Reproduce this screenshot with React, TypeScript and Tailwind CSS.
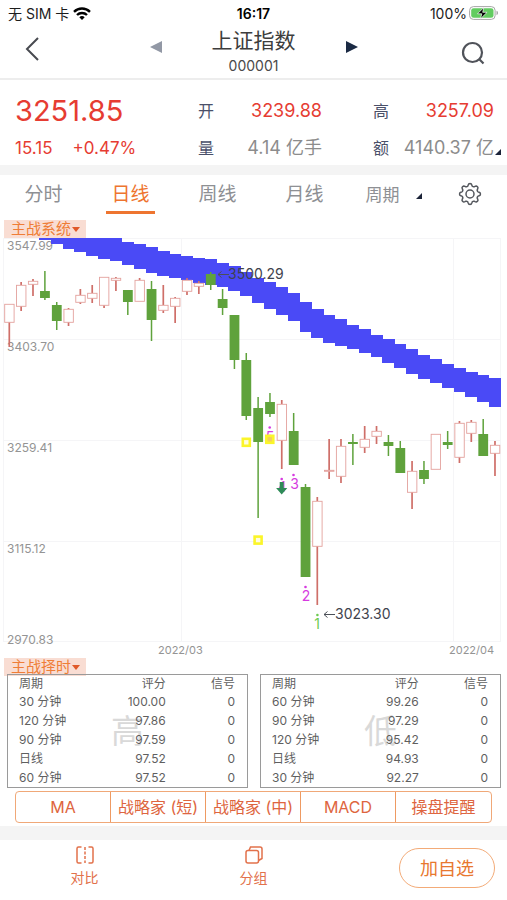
import type { ReactNode } from "react";

// [high, body top, body bottom, low, rising]
const candles: [number, number, number, number, boolean][] = [
  [66, 66, 84, 109, true],
  [44, 47, 68, 73, true],
  [41, 43, 46, 58, true],
  [33, 53, 60, 62, false],
  [64, 67, 83, 92, false],
  [70, 71, 84, 88, true],
  [51, 57, 64, 66, true],
  [47, 55, 60, 65, true],
  [39, 39, 67, 70, true],
  [39, 40, 42, 53, true],
  [52, 52, 64, 77, false],
  [40, 42, 63, 63, true],
  [43, 51, 82, 103, false],
  [47, 67, 72, 75, true],
  [59, 60, 68, 85, true],
  [40, 42, 53, 57, true],
  [43, 45, 48, 56, true],
  [34, 36, 47, 52, false],
  [51, 61, 70, 77, false],
  [77, 77, 122, 131, false],
  [115, 122, 178, 182, false],
  [159, 170, 204, 280, false],
  [155, 164, 176, 179, false],
  [162, 166, 202, 231, true],
  [175, 193, 227, 227, false],
  [246, 249, 339, 339, false],
  [259, 263, 308, 367, true],
  [201, 232, 233, 241, true],
  [201, 208, 238, 245, true],
  [196, 204, 206, 227, false],
  [188, 201, 209, 215, true],
  [188, 193, 198, 206, true],
  [197, 204, 208, 218, false],
  [203, 210, 235, 235, false],
  [223, 233, 254, 271, true],
  [223, 232, 241, 246, false],
  [196, 196, 231, 231, true],
  [193, 204, 207, 211, false],
  [183, 185, 219, 225, true],
  [182, 184, 195, 204, true],
  [181, 196, 218, 218, false],
  [203, 207, 215, 238, true],
];

// trend band, [top, bottom], the first entry belongs to candle 3
const band = [
  [0, 2], [0, 6], [0, 11], [0, 14], [0, 18], [0, 21], [0, 23], [4, 27],
  [6, 31], [9, 35], [13, 38], [16, 40], [18, 42], [20, 45], [21, 47],
  [25, 49], [28, 53], [34, 58], [40, 65], [44, 71], [49, 77], [55, 83],
  [64, 94], [71, 100], [77, 105], [81, 108], [87, 111], [91, 115], [97, 119],
  [101, 125], [106, 130], [111, 136], [117, 141], [121, 145], [126, 150],
  [130, 154], [134, 159], [137, 164], [140, 169],
];

const STEP = 11.846;
const centerOf = (i: number) => 9.3 + STEP * i;

// outline of the settings gear, eight rounded teeth
const gearPoints = Array.from({ length: 96 }, (_, i) => {
  const a = (i / 96) * Math.PI * 2;
  const r = 9.2 + 1.3 * Math.tanh(1.6 * Math.cos(8 * a));
  return `${(12 + r * Math.cos(a)).toFixed(2)},${(12 + r * Math.sin(a)).toFixed(2)}`;
}).join(" ");

function Chart() {
  return (
    <svg
      viewBox="0 0 507 420"
      className="block w-full"
      role="img"
      aria-label="上证指数 日线"
    >
      <g stroke="#f5f5f7" strokeWidth="1">
        {[0.5, 101.5, 202.5, 303.5, 403.5].map((y) => (
          <line key={y} x1="3" x2="501" y1={y} y2={y} />
        ))}
        {[3.5, 181.5, 453.5, 500.5].map((x) => (
          <line key={x} x1={x} x2={x} y1="0" y2="404" />
        ))}
      </g>
      <g fill="#949494" fontSize="12">
        <text x="7" y="12">3547.99</text>
        <text x="7" y="113">3403.70</text>
        <text x="7" y="214">3259.41</text>
        <text x="7" y="315">3115.12</text>
        <text x="7" y="406">2970.83</text>
        <text x="158" y="416" fontSize="11">2022/03</text>
        <text x="449" y="416" fontSize="11">2022/04</text>
      </g>

      {band.map(([top, bottom], i) => (
        <rect
          key={i}
          x={centerOf(i + 3) - STEP / 2}
          y={top}
          width={STEP + 0.3}
          height={bottom - top}
          fill="#4a4af6"
          shapeRendering="crispEdges"
        />
      ))}

      {candles.map(([high, top, bottom, low, rising], i) => {
        const x = centerOf(i);
        if (rising) {
          return (
            <g key={i}>
              <path
                d={`M${x} ${high}V${top}M${x} ${bottom}V${low}`}
                stroke="#cf6f69"
                strokeWidth="1.7"
              />
              <rect
                x={x - 4.6}
                y={top + 0.3}
                width="9.4"
                height={bottom - top}
                fill="#fff"
                stroke="#e3a19d"
                strokeWidth="0.9"
              />
            </g>
          );
        }
        return (
          <g key={i} fill="#5fa23c">
            <rect x={x - 0.7} y={high} width="1.5" height={low - high} />
            <rect x={x - 4.8} y={top} width="9.8" height={bottom - top} />
          </g>
        );
      })}

      <g fill="#d63be0" fontSize="14" textAnchor="middle">
        <circle cx="269.7" cy="189.5" r="1.3" />
        <text x="270" y="204">5</text>
        <circle cx="281.7" cy="241" r="1.3" />
        <text x="282" y="254">4</text>
        <circle cx="293.5" cy="237" r="1.3" />
        <text x="294.5" y="251">3</text>
        <circle cx="305.5" cy="349" r="1.3" />
        <text x="306" y="363">2</text>
        <g fill="#6ecb4f">
          <circle cx="317.4" cy="377" r="1.3" />
          <text x="317" y="391">1</text>
        </g>
      </g>
      <path d="M279.7 244h4v6h3.6l-5.6 6.5-5.6-6.5h3.6z" fill="#2e8b57" />

      <g fill="#fffde0" stroke="#fbf52a" strokeWidth="2.6">
        <rect x="242.8" y="200.8" width="7" height="7" />
        <rect x="266.3" y="197.8" width="7" height="7" fill="#f3cf5b" />
        <rect x="254.6" y="298.6" width="7" height="7" />
      </g>

      <g stroke="#4c5058" fill="none" strokeWidth="1">
        <path d="M218 36.5h11M221.5 33.5l-3.5 3 3.5 3" />
        <path d="M324 376.5h11M327.5 373.5l-3.5 3 3.5 3" />
      </g>
      <g fill="#3f434d" fontSize="14">
        <text x="228" y="41">3500.29</text>
        <text x="335" y="381">3023.30</text>
      </g>
    </svg>
  );
}

function Corner() {
  return (
    <svg viewBox="0 0 6 6" className="h-1.5 w-1.5" fill="#1b2338" aria-hidden="true">
      <path d="M6 0v6H0z" />
    </svg>
  );
}

function IndicatorLabel({ children }: { children: ReactNode }) {
  return (
    <button className="ml-1 flex h-[18px] w-[82px] items-center bg-[#f9ddd3] pl-[7px] text-[15px] leading-[18px] text-[#ef7d37]">
      {children}
      <svg viewBox="0 0 8 5" className="ml-px h-[5px] w-2" fill="#e0592a" aria-hidden="true">
        <path d="M0 0h8L4 5z" />
      </svg>
    </button>
  );
}

type Row = [string, string];

function ScoreTable({ rows, mark }: { rows: Row[]; mark: string }) {
  return (
    <div className="relative flex-1 border border-[#9a9a9a]">
      <span className="absolute inset-x-0 top-9 text-center text-[33px] leading-10 text-[#d9d9d9]">
        {mark}
      </span>
      <table className="relative w-full text-[12px] leading-[19px] text-[#5f5f5f]">
        <thead>
          <tr className="leading-[17px]">
            <th className="w-[36%] p-0 pl-[11px] text-left font-normal">周期</th>
            <th className="p-0 text-right font-normal">评分</th>
            <th className="w-[34%] p-0 pr-3 text-right font-normal">信号</th>
          </tr>
        </thead>
        <tbody>
          {rows.map(([period, score]) => (
            <tr key={period}>
              <td className="p-0 pl-[11px]">{period}</td>
              <td className="p-0 text-right">{score}</td>
              <td className="p-0 pr-3 text-right">0</td>
            </tr>
          ))}
        </tbody>
      </table>
    </div>
  );
}

const highRows: Row[] = [
  ["30 分钟", "100.00"],
  ["120 分钟", "97.86"],
  ["90 分钟", "97.59"],
  ["日线", "97.52"],
  ["60 分钟", "97.52"],
];

const lowRows: Row[] = [
  ["60 分钟", "99.26"],
  ["90 分钟", "97.29"],
  ["120 分钟", "95.42"],
  ["日线", "94.93"],
  ["30 分钟", "92.27"],
];

const indicators = ["MA", "战略家 (短)", "战略家 (中)", "MACD", "操盘提醒"];

export default function App() {
  return (
    <div className="min-h-screen bg-white font-['Inter','Noto_Sans_CJK_SC',sans-serif]">
      <div className="grid h-7 grid-cols-3 items-center px-2 pb-0.5 text-[14px] text-[#1c1c1c]">
        <div className="flex items-center gap-1">
          无 SIM 卡
          <svg viewBox="0 0 18 13" className="h-[13px] w-[18px]" fill="none" stroke="#000" strokeWidth="2.4" aria-hidden="true">
            <path d="M1 4.8a11.5 11.5 0 0 1 16 0" />
            <path d="M4 8a7.2 7.2 0 0 1 10 0" />
            <path d="M9 13L6.3 10.3a3.8 3.8 0 0 1 5.4 0z" fill="#000" stroke="none" />
          </svg>
        </div>
        <div className="text-center font-semibold text-black">16:17</div>
        <div className="flex items-center justify-end gap-0.5">
          100%
          <svg viewBox="0 0 30 14" className="h-3.5 w-[30px]" aria-hidden="true">
            <rect x="0.6" y="0.6" width="25.5" height="12.8" rx="3.8" fill="#fff" stroke="#a6a6a6" />
            <rect x="2.2" y="2.2" width="22.3" height="9.6" rx="2.4" fill="#62cc60" />
            <path d="M27.5 4.8c2 .6 2 3.8 0 4.4z" fill="#a6a6a6" />
            <path d="M14.8 1.5L8.5 7.8h4.3l-1.3 5 6.6-6.5h-4.4z" fill="#000" stroke="#fff" strokeWidth="0.7" />
          </svg>
        </div>
      </div>

      <header className="flex items-center justify-between border-b-2 border-[#ededed] px-[22px]">
        <button aria-label="返回" className="w-6 pb-2">
          <svg viewBox="0 0 24 24" className="h-6 w-6" fill="none" stroke="#484a50" strokeWidth="2">
            <path d="M16 1L5 12l11 11" />
          </svg>
        </button>
        <div className="flex w-52 items-center justify-between">
          <button aria-label="上一个" className="pb-3">
            <svg viewBox="0 0 12 12" className="h-3 w-3" fill="#9298a5">
              <path d="M12 0v12L0 6z" />
            </svg>
          </button>
          <h1 className="text-center text-[21px] leading-[26px] text-[#3d3d3d]">
            上证指数
            <span className="block text-[14px] leading-6 text-[#4a4a4a]">000001</span>
          </h1>
          <button aria-label="下一个" className="pb-3">
            <svg viewBox="0 0 12 12" className="h-3 w-3" fill="#1b2a44">
              <path d="M0 0v12l12-6z" />
            </svg>
          </button>
        </div>
        <button aria-label="搜索" className="w-6">
          <svg viewBox="0 0 24 24" className="h-6 w-6" fill="none" stroke="#50535a" strokeWidth="2.2">
            <circle cx="11.5" cy="11.5" r="9.5" />
            <path d="M17.8 17.8l4.7 4.7" />
          </svg>
        </button>
      </header>

      <section className="relative grid grid-cols-[183fr_175fr_121fr] pt-2.5 pb-px pl-[15px] pr-[13px]">
        <div className="text-[#e63c32]">
          <div className="text-[29px] leading-[42px]">3251.85</div>
          <div className="flex gap-5 text-[17px] leading-8">
            <span>15.15</span>
            <span>+0.47%</span>
          </div>
        </div>
        <div className="pr-[51px] text-[18px] text-[#8c8c8c]">
          <div className="flex items-center justify-between leading-[42px]">
            <span className="text-[16px] text-[#4a5069]">开</span>
            <span className="text-[#e63c32]">3239.88</span>
          </div>
          <div className="flex items-center justify-between leading-8">
            <span className="text-[16px] text-[#4a5069]">量</span>
            <span>4.14 亿手</span>
          </div>
        </div>
        <div className="text-[18px] text-[#8c8c8c]">
          <div className="flex items-center justify-between leading-[42px]">
            <span className="text-[16px] text-[#4a5069]">高</span>
            <span className="text-[#e63c32]">3257.09</span>
          </div>
          <div className="flex items-center justify-between leading-8">
            <span className="text-[16px] text-[#4a5069]">额</span>
            <span className="whitespace-nowrap">4140.37 亿</span>
          </div>
        </div>
        <div className="absolute right-1.5 bottom-2.5">
          <Corner />
        </div>
      </section>

      <nav className="grid h-[55px] grid-cols-[87fr_87fr_87fr_87fr_87fr_72fr] border-t-10 border-[#f4f4f4] pb-1.5 text-[19px] text-[#8e9094]">
        <button className="pt-0.5">分时</button>
        <button className="relative pt-0.5 text-[#ee7530]">
          日线
          <span className="absolute inset-x-[19px] bottom-0 h-[3px] bg-[#ee7530]" />
        </button>
        <button className="pt-0.5">周线</button>
        <button className="pt-0.5">月线</button>
        <button className="flex items-center justify-center gap-4 pt-0.5 pl-1 text-[17px]">
          周期
          <Corner />
        </button>
        <button aria-label="设置" className="flex items-center justify-center pr-0.5 pb-0.5">
          <svg viewBox="0 0 24 24" className="h-6 w-6" fill="none" stroke="#55585e" strokeWidth="1.5" strokeLinejoin="round">
            <polygon points={gearPoints} />
            <circle cx="12" cy="12" r="4" />
          </svg>
        </button>
      </nav>

      <IndicatorLabel>主战系统</IndicatorLabel>
      <Chart />

      <IndicatorLabel>主战择时</IndicatorLabel>
      <div className="-mt-0.5 flex gap-3 pr-1.5 pl-[7px]">
        <ScoreTable rows={highRows} mark="高" />
        <ScoreTable rows={lowRows} mark="低" />
      </div>

      <div className="mx-[15px] my-[3px] grid h-8 grid-cols-5 divide-x divide-[#ee9a62] rounded border border-[#f0a878] text-[16px] text-[#de6540]">
        {indicators.map((name) => (
          <button key={name} className="whitespace-nowrap">
            {name}
          </button>
        ))}
      </div>

      <footer className="grid grid-cols-3 border-t-14 border-[#f4f4f4] text-[14px] text-[#e2714b]">
        <button className="flex flex-col items-center gap-0.5 pt-1.5 leading-6">
          <svg viewBox="0 0 18 18" className="h-[18px] w-[18px]" fill="none" stroke="currentColor" strokeWidth="1.5" aria-hidden="true">
            <path d="M5.5 1H2.5a1.5 1.5 0 0 0-1.5 1.5v13a1.5 1.5 0 0 0 1.5 1.5h3M12.5 1h3a1.5 1.5 0 0 1 1.5 1.5v13a1.5 1.5 0 0 1-1.5 1.5h-3" />
            <path d="M9 1v16" strokeDasharray="3 1.5" />
          </svg>
          对比
        </button>
        <button className="flex flex-col items-center gap-0.5 pt-1.5 leading-6">
          <svg viewBox="0 0 18 18" className="h-[18px] w-[18px]" fill="none" stroke="currentColor" strokeWidth="1.5" aria-hidden="true">
            <rect x="1" y="4.5" width="12.5" height="12.5" rx="2" />
            <path d="M4 4.5L5.5 1H15a2 2 0 0 1 2 2v9.5L13.5 14.5" />
          </svg>
          分组
        </button>
        <div className="pt-2 pr-3 text-right">
          <button className="h-10 w-24 rounded-full border border-[#f3ab78] text-[18px] text-[#e8772f]">
            加自选
          </button>
        </div>
      </footer>
    </div>
  );
}
